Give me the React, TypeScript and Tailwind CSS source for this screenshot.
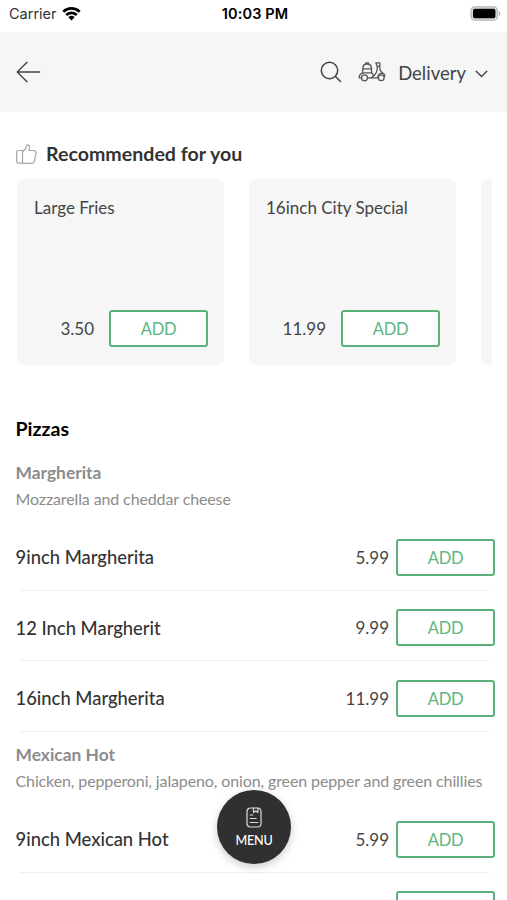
interface MenuItem {
  name: string;
  price: string;
}

interface MenuGroup {
  name: string;
  description: string;
  items: MenuItem[];
}

const recommended: MenuItem[] = [
  { name: 'Large Fries', price: '3.50' },
  { name: '16inch City Special', price: '11.99' },
];

const groups: MenuGroup[] = [
  {
    name: 'Margherita',
    description: 'Mozzarella and cheddar cheese',
    items: [
      { name: '9inch Margherita', price: '5.99' },
      { name: '12 Inch Margherit', price: '9.99' },
      { name: '16inch Margherita', price: '11.99' },
    ],
  },
  {
    name: 'Mexican Hot',
    description: 'Chicken, pepperoni, jalapeno, onion, green pepper and green chillies',
    items: [
      { name: '9inch Mexican Hot', price: '5.99' },
      { name: '', price: '' },
    ],
  },
];

function AddButton({ label = 'ADD' }: { label?: string }) {
  return (
    <button className="flex h-[37px] w-[99px] shrink-0 items-center justify-center rounded-[3px] border-2 border-[#5db07b] bg-white pt-px text-[16.5px] tracking-[-0.3px] text-[#5db582]">
      {label}
    </button>
  );
}

function StatusBar() {
  return (
    <div className="flex h-8 shrink-0 items-start justify-between bg-white pt-1 pr-[6px] pl-[9px] font-['Inter'] text-black">
      <div className="flex w-[120px] items-center gap-[5px]">
        <span className="text-[14.5px] leading-5 text-[#333]">Carrier</span>
        <svg className="-mt-0.5 h-[15px] w-[19px]" viewBox="0 0 19 15" fill="none" stroke="black" strokeWidth="2.7">
          <path d="M1.3 5.8a11.7 11.7 0 0 1 16.4 0" />
          <path d="M4.2 9a7.6 7.6 0 0 1 10.6 0" />
          <path d="M6.4 11.3a4.5 4.5 0 0 1 6.2 0L9.5 14.6z" fill="black" stroke="none" />
        </svg>
      </div>
      <span className="text-[14.5px] leading-5 font-semibold tracking-[0.15px]">10:03 PM</span>
      <div className="flex w-[120px] justify-end pt-[2px]">
        <svg className="h-[15px] w-[31px]" viewBox="0 0 31 15">
          <rect x="1" y="0.8" width="26.4" height="13.4" rx="3.8" fill="#ddd" stroke="#b5b5b5" strokeWidth="1.2" />
          <rect x="3" y="2.8" width="22.4" height="9.4" rx="1.8" fill="black" />
          <path d="M28.8 5v5c2-.8 2-4.2 0-5z" fill="#aaa" />
        </svg>
      </div>
    </div>
  );
}

function ScooterIcon() {
  return (
    <svg className="h-[22px] w-[28px]" viewBox="0 0 28 22" fill="none" stroke="#555" strokeWidth="1.3" strokeLinejoin="round" strokeLinecap="round">
      <path d="M4.8 7.5C4.8 4.500 6.500 3 9 3s4.500 1.500 4.500 4.500v4.300H4.800z" />
      <path d="M4.800 7.800h8.700M7.800 2.800V1.800h2.600v1" />
      <path d="M4.800 11.800C2.500 12.500 1.200 14.200 1.200 16.800h2.100M13.500 11.800c2.400 1 2.200 5-.8 5H9.700" />
      <circle cx="6.500" cy="16.800" r="3" />
      <path d="M17.800 1.800h4v3.500h-2.600zM19.200 5.300c.3 4-.8 7.500-3.700 9.800M21.800 5.300c-.3 3 .6 5.300 3.200 7" />
      <path d="M13 16.800h6.800c-.2-3.300 2-4.800 5.200-4.200 1.500.3 2 1.500 1.600 3" />
      <circle cx="23.200" cy="16.800" r="2.900" />
    </svg>
  );
}

function Header() {
  return (
    <header className="flex h-20 shrink-0 items-center bg-[#f6f6f6] pr-[19px] pl-4 text-[#444]">
      <svg className="h-[22px] w-[25px]" viewBox="0 0 25 22" fill="none" stroke="#444" strokeWidth="1.4" strokeLinecap="round" strokeLinejoin="round">
        <path d="M11 1.2L1.2 11 11 20.8M1.2 11H23.5" />
      </svg>
      <div className="ml-auto flex items-center">
        <svg className="h-[22px] w-[22px]" viewBox="0 0 22 22" fill="none" stroke="#444" strokeWidth="1.5" strokeLinecap="round">
          <circle cx="9.5" cy="9.5" r="8.2" />
          <path d="M15.5 15.5l5 5" />
        </svg>
        <div className="ml-4">
          <ScooterIcon />
        </div>
        <span className="ml-[12px] pt-px text-[18.5px] leading-6">Delivery</span>
        <svg className="mt-1 ml-[9px] h-2 w-[13px]" viewBox="0 0 13 8" fill="none" stroke="#444" strokeWidth="1.4" strokeLinecap="round" strokeLinejoin="round">
          <path d="M1.2 1.2l5.3 5.3 5.3-5.3" />
        </svg>
      </div>
    </header>
  );
}

function RecommendedCard({ item }: { item: MenuItem }) {
  return (
    <div className="flex h-[186px] w-[207px] shrink-0 flex-col justify-between rounded-[7px] bg-[#f6f6f6] pt-[17px] pr-4 pb-[18px] pl-[17px]">
      <h3 className="text-[17px] leading-6 text-[#444]">{item.name}</h3>
      <div className="flex items-center justify-end gap-[15px]">
        <span className="text-[17px] text-[#444]">{item.price}</span>
        <AddButton />
      </div>
    </div>
  );
}

function MenuRow({ item }: { item: MenuItem }) {
  return (
    <div className="h-[70.5px] shrink-0 pt-[19px]">
      <div className="flex items-center pr-[12px] pl-[15.5px]">
        <span className="flex-1 pt-px text-[18.4px] font-medium text-[#333]">{item.name}</span>
        <span className="mr-[7px] text-[17px] text-[#444]">{item.price}</span>
        <AddButton label={item.name ? 'ADD' : ''} />
      </div>
      <div className="mt-[14px] mr-[18px] ml-5 h-px bg-[#f0f0f0]" />
    </div>
  );
}

export default function App() {
  return (
    <div className="relative flex h-[900px] w-full flex-col overflow-hidden bg-white font-['Lato',sans-serif]">
      <StatusBar />
      <Header />

      <div className="mt-[30px] flex h-6 shrink-0 items-center gap-[9px] pl-4">
        <svg className="h-[21px] w-[21px]" viewBox="0 0 21 21" fill="none" stroke="#a5a5a5" strokeWidth="1.2" strokeLinejoin="round" strokeLinecap="round">
          <path d="M6.5 6.5H2.4c-1 0-1.7.7-1.7 1.7v9.3c0 1 .7 1.7 1.7 1.7h4.1" />
          <path d="M6.5 7.5L10 4.5V2.7c0-1.2.6-1.9 1.5-1.9 1.2 0 2 1 2 2.4 0 1.4-.3 2.5-.8 3.3h5.2c1.5 0 2.4 1.2 2.2 2.5l-1.6 8.2c-.3 1.400-1.200 2.200-2.500 2.200H8.500c-1.300 0-2-.7-2-1.900z" />
        </svg>
        <h2 className="text-[19.6px] leading-6 font-bold text-[#333]">Recommended for you</h2>
      </div>

      <div className="mt-[13px] mr-[15px] ml-[17px] flex shrink-0 gap-[25px] overflow-hidden">
        {recommended.map((item) => (
          <RecommendedCard key={item.name} item={item} />
        ))}
        <div className="h-[186px] w-[207px] shrink-0 rounded-[7px] bg-[#f6f6f6]" />
      </div>

      <h2 className="mt-[52px] h-6 shrink-0 pl-[15.5px] text-[19.6px] leading-6 font-bold text-black">Pizzas</h2>

      <div className="mt-[8.4px] flex flex-col">
        {groups.map((group) => (
          <section key={group.name}>
            <div className="h-[70.5px] pt-[11.5px] pl-[15.5px] whitespace-nowrap">
              <h3 className="text-[17.4px] leading-6 font-bold text-[#8c8c8c]">{group.name}</h3>
              <p className="mt-[2px] text-[16px] leading-6 tracking-[-0.12px] text-[#8c8c8c]">{group.description}</p>
            </div>
            {group.items.map((item, index) => (
              <MenuRow key={index} item={item} />
            ))}
          </section>
        ))}
      </div>

      <button className="absolute top-[790px] left-[217px] flex h-[74px] w-[74px] flex-col items-center rounded-full bg-[#303030] pt-[17px] text-white shadow-[0_3px_9px_rgba(0,0,0,0.2)]">
        <svg className="h-[21px] w-4" viewBox="0 0 16 21" fill="none" stroke="#ddd" strokeWidth="1.2" strokeLinecap="round" strokeLinejoin="round">
          <rect x="1" y="1" width="14" height="19" rx="3.5" />
          <path d="M7.5 1.2v4.3l2.2-1.6 2.2 1.6V1.2M4.2 8h2.5M4.2 11.5h6M4.2 15.5h7.6" />
        </svg>
        <span className="mt-[5px] text-[12.6px] leading-4 font-medium tracking-[-0.2px]">MENU</span>
      </button>
    </div>
  );
}
